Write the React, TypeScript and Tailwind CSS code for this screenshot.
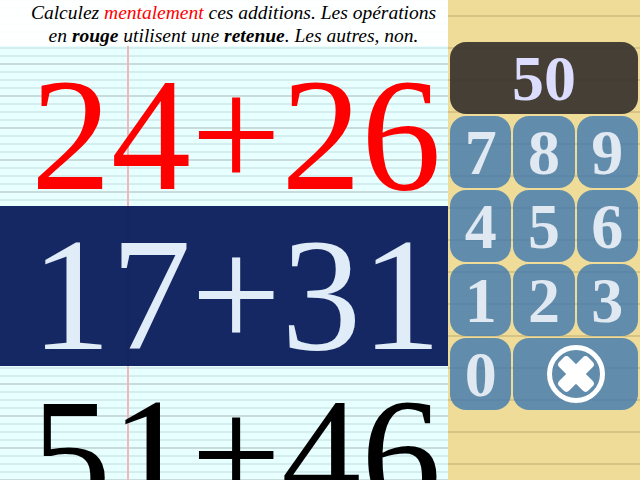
const keys = ["7", "8", "9", "4", "5", "6", "1", "2", "3"];

const sums = [
  { text: "24+26", cls: "text-[#ff0000]" },
  { text: "17+31", cls: "text-[#e0ecf8] bg-[#0a1c5c]/95" },
  { text: "51+46", cls: "text-black" },
];

const Key = ({ label }: { label: string }) => (
  <div className="flex h-[72px] items-center justify-center rounded-[16px] bg-[#3f78b0]/80 pt-[2px] text-[64px] font-bold text-[#e0e8f2]">
    {label}
  </div>
);

const ClearIcon = () => (
  <svg width="60" height="60" viewBox="0 0 60 60">
    <circle cx="30" cy="30" r="26.5" fill="none" stroke="white" strokeWidth="5" />
    <rect x="9.5" y="23" width="41" height="14" rx="4" fill="white" transform="rotate(45 30 30)" />
    <rect x="9.5" y="23" width="41" height="14" rx="4" fill="white" transform="rotate(-45 30 30)" />
  </svg>
);

export default function App() {
  return (
    <div className="flex h-[480px] w-[640px] overflow-hidden font-['Liberation_Serif',serif]">
      <div className="flex w-[448px] flex-col overflow-hidden bg-[#e8ffff] bg-[linear-gradient(90deg,transparent_127px,#f0b8b8_127px,#f0b8b8_129px,transparent_129px),repeating-linear-gradient(180deg,#c8dcdc_0px,#c8dcdc_1px,transparent_1px,transparent_31px,#c8dcdc_31px,#c8dcdc_32px),repeating-linear-gradient(180deg,#d4eef0_0px,#d4eef0_1px,transparent_1px,transparent_7px,#d4eef0_7px,#d4eef0_8px)]">
        <div className="h-[46px] shrink-0 bg-white/95 pt-[1px] pl-[19px] text-center text-[19.5px] leading-[23px] italic text-black">
          Calculez <span className="text-[#ff0000]">mentalement</span> ces additions. Les opérations
          <br />
          en <b>rouge</b> utilisent une <b>retenue</b>. Les autres, non.
        </div>
        {sums.map((s) => (
          <div key={s.text} className={`h-[160px] shrink-0 pt-[9px] pl-[31px] text-[160px] leading-[160px] ${s.cls}`}>
            {s.text}
          </div>
        ))}
      </div>
      <div className="flex w-[192px] flex-col gap-[2px] bg-[#eedc98] bg-[repeating-linear-gradient(180deg,transparent_0px,transparent_15px,#d6c486_15px,#d6c486_17px,transparent_17px,transparent_32px)] pt-[42px] pl-[2px] pr-[2px]">
        <div className="flex h-[72px] items-center justify-center rounded-[16px] bg-[#3c3630]/95 pt-[2px] text-[64px] font-bold text-[#dcdcff]">
          50
        </div>
        <div className="grid grid-cols-3 gap-[2px]">
          {keys.map((k) => (
            <Key key={k} label={k} />
          ))}
          <Key label="0" />
          <div className="col-span-2 flex items-center justify-center rounded-[16px] bg-[#3f78b0]/80">
            <ClearIcon />
          </div>
        </div>
      </div>
    </div>
  );
}
